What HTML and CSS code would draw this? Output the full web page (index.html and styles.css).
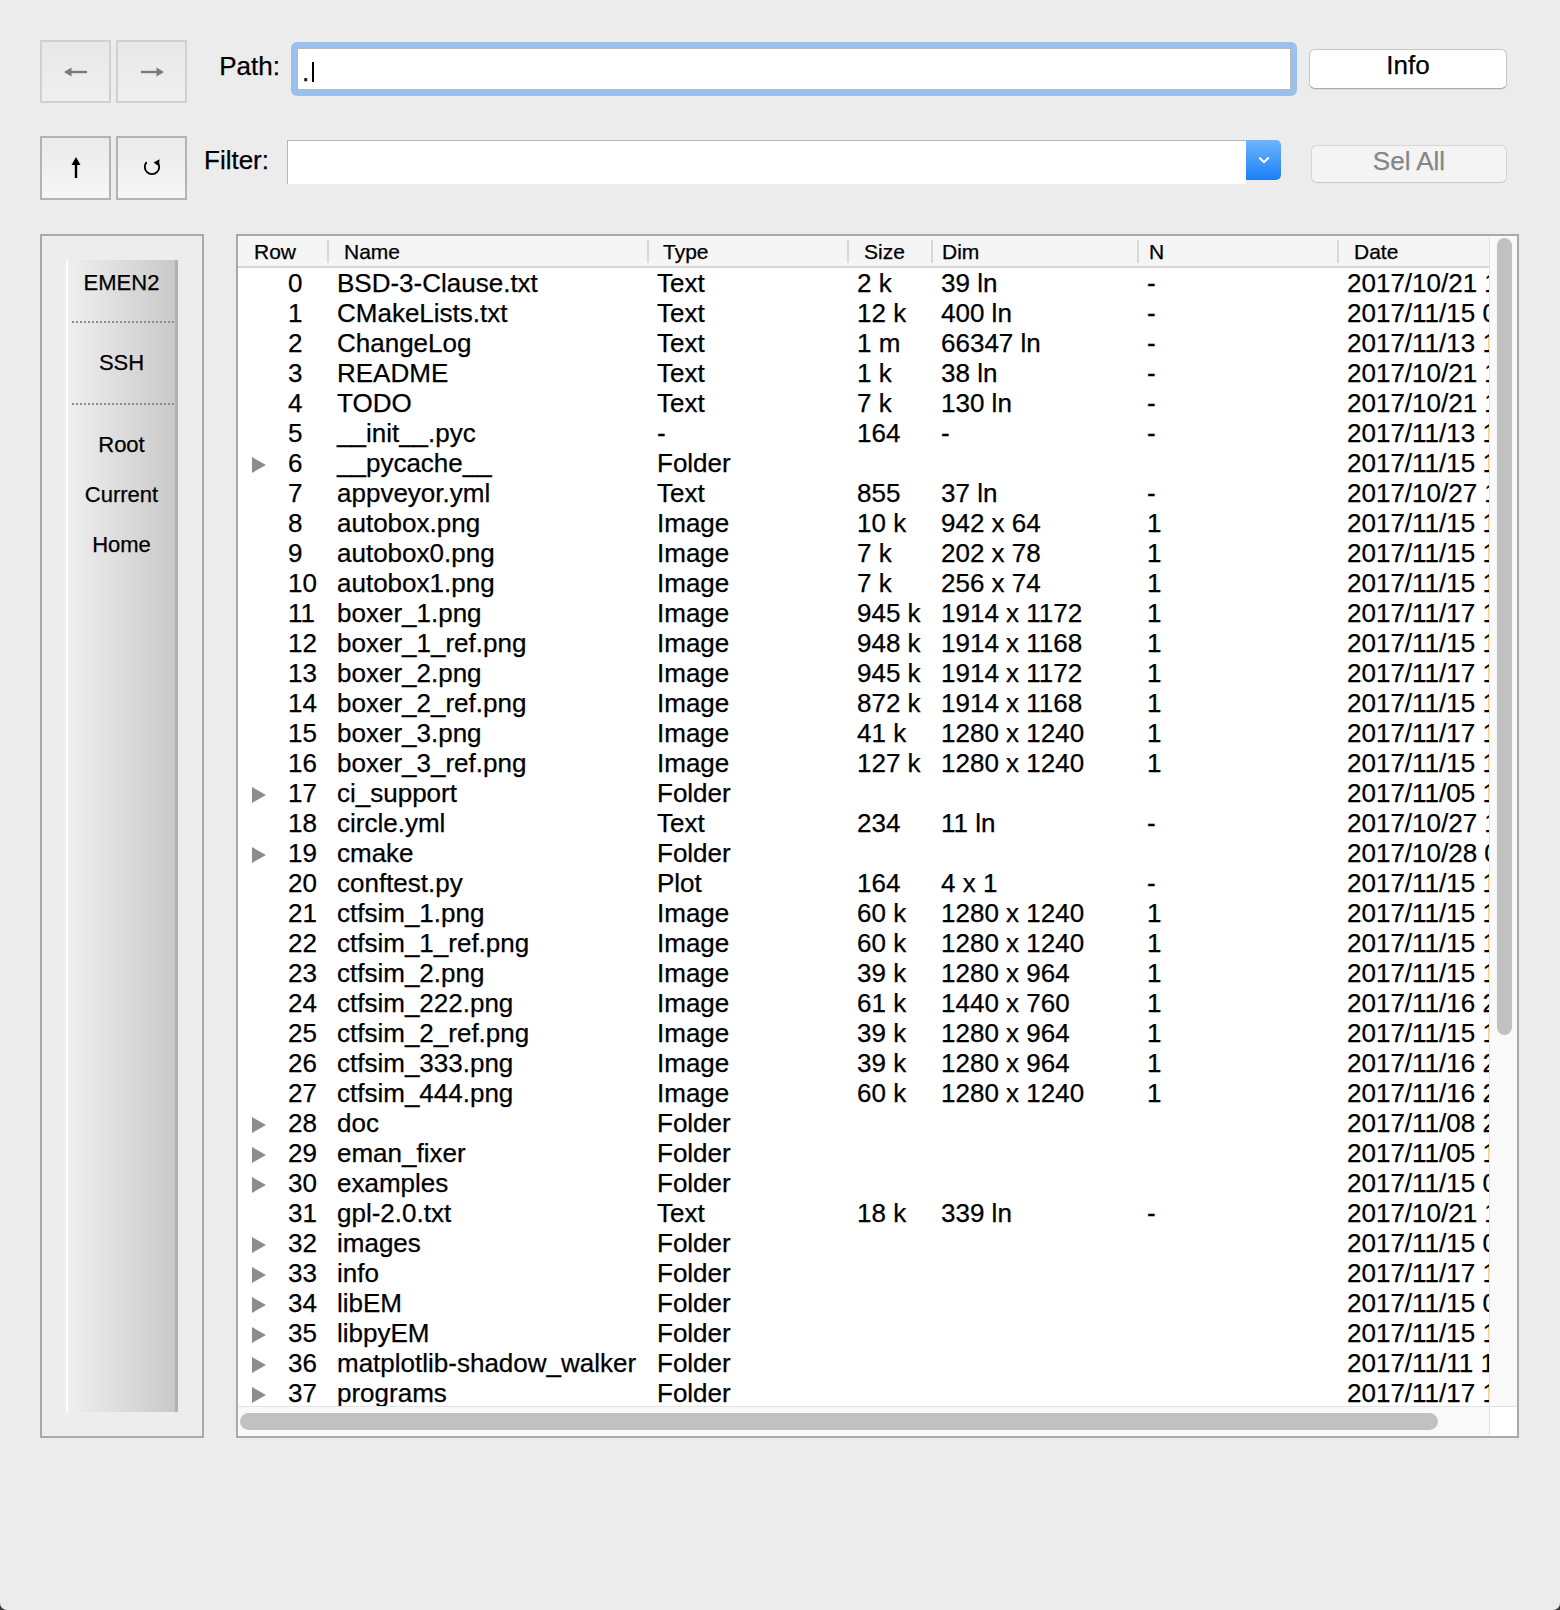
FILE: index.html
```html
<!DOCTYPE html>
<html>
<head>
<meta charset="utf-8">
<title>File Browser</title>
<link rel="stylesheet" href="styles.css">
</head>
<body>
<div class="window">
  <div class="bar bar1">
    <div class="btnpair">
      <div class="tbtn dis"><svg width="24" height="12" viewBox="0 0 24 12"><path d="M5 6H23" stroke="#7a7a7a" stroke-width="2.4"/><path d="M0 6L7.5 1.5V10.5Z" fill="#7a7a7a"/></svg></div>
      <div class="tbtn dis"><svg width="24" height="12" viewBox="0 0 24 12"><path d="M1 6H19" stroke="#7a7a7a" stroke-width="2.4"/><path d="M24 6L16.5 1.5V10.5Z" fill="#7a7a7a"/></svg></div>
    </div>
    <div class="lbl lbl-path">Path:</div>
    <div class="pathring"><div class="pathinput">.<span class="caret"></span></div></div>
    <div class="pbtn info">Info</div>
  </div>
  <div class="bar bar2">
    <div class="btnpair">
      <div class="tbtn"><svg width="12" height="22" viewBox="0 0 12 22"><path d="M6 6V21" stroke="#000" stroke-width="2.4"/><path d="M6 0L1.5 8H10.5Z" fill="#000"/></svg></div>
      <div class="tbtn"><svg width="20" height="20" viewBox="0 0 20 20"><path d="M4.6 4.2A7.2 7.2 0 1 0 15.4 4.2" fill="none" stroke="#000" stroke-width="1.9"/><path d="M17.6 1.2L16.8 8.2L11.6 4.6Z" fill="#000"/></svg></div>
    </div>
    <div class="lbl lbl-filter">Filter:</div>
    <div class="combo">
      <div class="combo-field"></div>
      <div class="combo-btn"><svg width="12" height="8" viewBox="0 0 12 8"><path d="M1.2 1.5L6 6.2L10.8 1.5" fill="none" stroke="#fff" stroke-width="2"/></svg></div>
    </div>
    <div class="pbtn selall">Sel All</div>
  </div>
  <div class="main">
    <div class="sidebar">
      <div class="places">
        <div class="place first">EMEN2</div>
        <div class="sep"><div class="dots"></div></div>
        <div class="place">SSH</div>
        <div class="sep"><div class="dots"></div></div>
        <div class="place">Root</div>
        <div class="place">Current</div>
        <div class="place">Home</div>
      </div>
    </div>
    <div class="tablebox">
      <div class="viewport">
        <div class="thead">
          <div class="h h-row">Row</div>
          <div class="h h-name">Name</div>
          <div class="h h-type">Type</div>
          <div class="h h-size">Size</div>
          <div class="h h-dim">Dim</div>
          <div class="h h-n">N</div>
          <div class="h h-date">Date</div>
        </div>
        <div class="row"><div class="c c-row"><span class="tw"></span>0</div><div class="c">BSD-3-Clause.txt</div><div class="c">Text</div><div class="c">2 k</div><div class="c">39 ln</div><div class="c">-</div><div class="c">2017/10/21 12:47</div></div>
        <div class="row"><div class="c c-row"><span class="tw"></span>1</div><div class="c">CMakeLists.txt</div><div class="c">Text</div><div class="c">12 k</div><div class="c">400 ln</div><div class="c">-</div><div class="c">2017/11/15 09:12</div></div>
        <div class="row"><div class="c c-row"><span class="tw"></span>2</div><div class="c">ChangeLog</div><div class="c">Text</div><div class="c">1 m</div><div class="c">66347 ln</div><div class="c">-</div><div class="c">2017/11/13 14:05</div></div>
        <div class="row"><div class="c c-row"><span class="tw"></span>3</div><div class="c">README</div><div class="c">Text</div><div class="c">1 k</div><div class="c">38 ln</div><div class="c">-</div><div class="c">2017/10/21 12:47</div></div>
        <div class="row"><div class="c c-row"><span class="tw"></span>4</div><div class="c">TODO</div><div class="c">Text</div><div class="c">7 k</div><div class="c">130 ln</div><div class="c">-</div><div class="c">2017/10/21 12:47</div></div>
        <div class="row"><div class="c c-row"><span class="tw"></span>5</div><div class="c">__init__.pyc</div><div class="c">-</div><div class="c">164</div><div class="c">-</div><div class="c">-</div><div class="c">2017/11/13 16:30</div></div>
        <div class="row"><div class="c c-row"><span class="tw fold"></span>6</div><div class="c">__pycache__</div><div class="c">Folder</div><div class="c"></div><div class="c"></div><div class="c"></div><div class="c">2017/11/15 16:22</div></div>
        <div class="row"><div class="c c-row"><span class="tw"></span>7</div><div class="c">appveyor.yml</div><div class="c">Text</div><div class="c">855</div><div class="c">37 ln</div><div class="c">-</div><div class="c">2017/10/27 11:03</div></div>
        <div class="row"><div class="c c-row"><span class="tw"></span>8</div><div class="c">autobox.png</div><div class="c">Image</div><div class="c">10 k</div><div class="c">942 x 64</div><div class="c">1</div><div class="c">2017/11/15 10:41</div></div>
        <div class="row"><div class="c c-row"><span class="tw"></span>9</div><div class="c">autobox0.png</div><div class="c">Image</div><div class="c">7 k</div><div class="c">202 x 78</div><div class="c">1</div><div class="c">2017/11/15 10:41</div></div>
        <div class="row"><div class="c c-row"><span class="tw"></span>10</div><div class="c">autobox1.png</div><div class="c">Image</div><div class="c">7 k</div><div class="c">256 x 74</div><div class="c">1</div><div class="c">2017/11/15 10:41</div></div>
        <div class="row"><div class="c c-row"><span class="tw"></span>11</div><div class="c">boxer_1.png</div><div class="c">Image</div><div class="c">945 k</div><div class="c">1914 x 1172</div><div class="c">1</div><div class="c">2017/11/17 13:58</div></div>
        <div class="row"><div class="c c-row"><span class="tw"></span>12</div><div class="c">boxer_1_ref.png</div><div class="c">Image</div><div class="c">948 k</div><div class="c">1914 x 1168</div><div class="c">1</div><div class="c">2017/11/15 10:41</div></div>
        <div class="row"><div class="c c-row"><span class="tw"></span>13</div><div class="c">boxer_2.png</div><div class="c">Image</div><div class="c">945 k</div><div class="c">1914 x 1172</div><div class="c">1</div><div class="c">2017/11/17 13:58</div></div>
        <div class="row"><div class="c c-row"><span class="tw"></span>14</div><div class="c">boxer_2_ref.png</div><div class="c">Image</div><div class="c">872 k</div><div class="c">1914 x 1168</div><div class="c">1</div><div class="c">2017/11/15 10:41</div></div>
        <div class="row"><div class="c c-row"><span class="tw"></span>15</div><div class="c">boxer_3.png</div><div class="c">Image</div><div class="c">41 k</div><div class="c">1280 x 1240</div><div class="c">1</div><div class="c">2017/11/17 13:58</div></div>
        <div class="row"><div class="c c-row"><span class="tw"></span>16</div><div class="c">boxer_3_ref.png</div><div class="c">Image</div><div class="c">127 k</div><div class="c">1280 x 1240</div><div class="c">1</div><div class="c">2017/11/15 10:41</div></div>
        <div class="row"><div class="c c-row"><span class="tw fold"></span>17</div><div class="c">ci_support</div><div class="c">Folder</div><div class="c"></div><div class="c"></div><div class="c"></div><div class="c">2017/11/05 15:20</div></div>
        <div class="row"><div class="c c-row"><span class="tw"></span>18</div><div class="c">circle.yml</div><div class="c">Text</div><div class="c">234</div><div class="c">11 ln</div><div class="c">-</div><div class="c">2017/10/27 11:03</div></div>
        <div class="row"><div class="c c-row"><span class="tw fold"></span>19</div><div class="c">cmake</div><div class="c">Folder</div><div class="c"></div><div class="c"></div><div class="c"></div><div class="c">2017/10/28 09:44</div></div>
        <div class="row"><div class="c c-row"><span class="tw"></span>20</div><div class="c">conftest.py</div><div class="c">Plot</div><div class="c">164</div><div class="c">4 x 1</div><div class="c">-</div><div class="c">2017/11/15 15:37</div></div>
        <div class="row"><div class="c c-row"><span class="tw"></span>21</div><div class="c">ctfsim_1.png</div><div class="c">Image</div><div class="c">60 k</div><div class="c">1280 x 1240</div><div class="c">1</div><div class="c">2017/11/15 10:41</div></div>
        <div class="row"><div class="c c-row"><span class="tw"></span>22</div><div class="c">ctfsim_1_ref.png</div><div class="c">Image</div><div class="c">60 k</div><div class="c">1280 x 1240</div><div class="c">1</div><div class="c">2017/11/15 10:41</div></div>
        <div class="row"><div class="c c-row"><span class="tw"></span>23</div><div class="c">ctfsim_2.png</div><div class="c">Image</div><div class="c">39 k</div><div class="c">1280 x 964</div><div class="c">1</div><div class="c">2017/11/15 10:41</div></div>
        <div class="row"><div class="c c-row"><span class="tw"></span>24</div><div class="c">ctfsim_222.png</div><div class="c">Image</div><div class="c">61 k</div><div class="c">1440 x 760</div><div class="c">1</div><div class="c">2017/11/16 21:15</div></div>
        <div class="row"><div class="c c-row"><span class="tw"></span>25</div><div class="c">ctfsim_2_ref.png</div><div class="c">Image</div><div class="c">39 k</div><div class="c">1280 x 964</div><div class="c">1</div><div class="c">2017/11/15 10:41</div></div>
        <div class="row"><div class="c c-row"><span class="tw"></span>26</div><div class="c">ctfsim_333.png</div><div class="c">Image</div><div class="c">39 k</div><div class="c">1280 x 964</div><div class="c">1</div><div class="c">2017/11/16 21:15</div></div>
        <div class="row"><div class="c c-row"><span class="tw"></span>27</div><div class="c">ctfsim_444.png</div><div class="c">Image</div><div class="c">60 k</div><div class="c">1280 x 1240</div><div class="c">1</div><div class="c">2017/11/16 21:15</div></div>
        <div class="row"><div class="c c-row"><span class="tw fold"></span>28</div><div class="c">doc</div><div class="c">Folder</div><div class="c"></div><div class="c"></div><div class="c"></div><div class="c">2017/11/08 20:02</div></div>
        <div class="row"><div class="c c-row"><span class="tw fold"></span>29</div><div class="c">eman_fixer</div><div class="c">Folder</div><div class="c"></div><div class="c"></div><div class="c"></div><div class="c">2017/11/05 15:20</div></div>
        <div class="row"><div class="c c-row"><span class="tw fold"></span>30</div><div class="c">examples</div><div class="c">Folder</div><div class="c"></div><div class="c"></div><div class="c"></div><div class="c">2017/11/15 09:12</div></div>
        <div class="row"><div class="c c-row"><span class="tw"></span>31</div><div class="c">gpl-2.0.txt</div><div class="c">Text</div><div class="c">18 k</div><div class="c">339 ln</div><div class="c">-</div><div class="c">2017/10/21 12:47</div></div>
        <div class="row"><div class="c c-row"><span class="tw fold"></span>32</div><div class="c">images</div><div class="c">Folder</div><div class="c"></div><div class="c"></div><div class="c"></div><div class="c">2017/11/15 09:12</div></div>
        <div class="row"><div class="c c-row"><span class="tw fold"></span>33</div><div class="c">info</div><div class="c">Folder</div><div class="c"></div><div class="c"></div><div class="c"></div><div class="c">2017/11/17 13:58</div></div>
        <div class="row"><div class="c c-row"><span class="tw fold"></span>34</div><div class="c">libEM</div><div class="c">Folder</div><div class="c"></div><div class="c"></div><div class="c"></div><div class="c">2017/11/15 09:12</div></div>
        <div class="row"><div class="c c-row"><span class="tw fold"></span>35</div><div class="c">libpyEM</div><div class="c">Folder</div><div class="c"></div><div class="c"></div><div class="c"></div><div class="c">2017/11/15 16:22</div></div>
        <div class="row"><div class="c c-row"><span class="tw fold"></span>36</div><div class="c">matplotlib-shadow_walker</div><div class="c">Folder</div><div class="c"></div><div class="c"></div><div class="c"></div><div class="c">2017/11/11 14:36</div></div>
        <div class="row"><div class="c c-row"><span class="tw fold"></span>37</div><div class="c">programs</div><div class="c">Folder</div><div class="c"></div><div class="c"></div><div class="c"></div><div class="c">2017/11/17 13:58</div></div>
      </div>
      <div class="vscroll"><div class="vthumb"></div></div>
      <div class="hscroll"><div class="hthumb"></div></div>
      <div class="corner"></div>
    </div>
  </div>
</div>
</body>
</html>
```
FILE: styles.css
```css
html {
  background: #3a3a3a;
}
body {
  margin: 0;
}
.window {
  width: 1560px;
  height: 1610px;
  box-sizing: border-box;
  padding-top: 40px;
  background: #ececec;
  border-radius: 0 0 7px 7px;
  font-family: "Liberation Sans", Arial, Helvetica, sans-serif;
  color: #000;
  overflow: hidden;
  -webkit-text-stroke: 0.25px currentColor;
}

/* ---------- top bars ---------- */
.bar {
  display: flex;
  align-items: flex-start;
  margin-left: 40px;
}
.bar1 {
  height: 63px;
}
.bar2 {
  height: 64px;
  margin-top: 33px;
}
.btnpair {
  display: flex;
  gap: 5px;
  height: 100%;
}
.tbtn {
  width: 71px;
  height: 100%;
  box-sizing: border-box;
  border: 2px solid #b3b3b3;
  background: linear-gradient(#eaeaea, #f6f6f6);
  display: flex;
  align-items: center;
  justify-content: center;
}
.tbtn.dis {
  border-color: #d0d0d0;
  background: linear-gradient(#e8e8e8, #efefef);
}
.lbl {
  font-size: 26px;
  line-height: 30px;
  text-align: right;
  box-sizing: border-box;
  white-space: nowrap;
}
.lbl-path {
  width: 104px;
  padding-right: 11px;
  margin-top: 11px;
}
.lbl-filter {
  width: 100px;
  padding-right: 18px;
  margin-top: 9px;
}
.pathring {
  width: 1006px;
  height: 54px;
  margin-top: 2px;
  box-sizing: border-box;
  padding: 6px;
  background: #98c1ee;
  border-radius: 6px;
}
.pathinput {
  height: 42px;
  box-sizing: border-box;
  border: 1px solid #b7b7b7;
  background: #fff;
  font-size: 26px;
  line-height: 30px;
  padding: 8px 0 0 4px;
}
.caret {
  display: inline-block;
  width: 2px;
  height: 20px;
  margin-left: 3px;
  background: #000;
  vertical-align: -1px;
}
.pbtn {
  box-sizing: border-box;
  font-size: 26px;
  line-height: 30px;
  text-align: center;
  border-radius: 6px;
}
.info {
  width: 198px;
  height: 40px;
  margin-left: 12px;
  margin-top: 9px;
  background: #fff;
  border: 1px solid #c6c6c6;
  border-bottom-color: #a9a9a9;
  box-shadow: 0 1px 0 rgba(0, 0, 0, 0.05);
}
.selall {
  width: 196px;
  height: 38px;
  margin-left: 30px;
  margin-top: 9px;
  background: #f4f4f4;
  border: 1px solid #d6d6d6;
  border-bottom-color: #c8c8c8;
  color: #868686;
}
.combo {
  display: flex;
  width: 994px;
  height: 44px;
  margin-top: 4px;
}
.combo-field {
  flex: 1;
  background: #fff;
  border-top: 1px solid #b5b5b5;
  border-left: 1px solid #b5b5b5;
}
.combo-btn {
  width: 35px;
  height: 40px;
  border-radius: 0 5px 5px 0;
  background: linear-gradient(#6eb5fb, #1a7ff8);
  display: flex;
  align-items: center;
  justify-content: center;
}

/* ---------- main area ---------- */
.main {
  display: flex;
  gap: 32px;
  margin-top: 34px;
  margin-left: 40px;
  height: 1204px;
}
.sidebar {
  width: 164px;
  box-sizing: border-box;
  border: 2px solid #a9a9a9;
  background: #ededed;
  padding: 24px;
  display: flex;
}
.places {
  flex: 1;
  border-left: 2px solid #fff;
  border-right: 3px solid #b2b2b2;
  background: linear-gradient(to right, #efefef, #c9c9c9);
  font-size: 22px;
  text-align: center;
}
.place {
  height: 50px;
  line-height: 50px;
}
.place.first {
  height: 46px;
  line-height: 46px;
}
.sep {
  height: 32px;
  padding: 15px 0 0 4px;
  box-sizing: border-box;
}
.dots {
  height: 2px;
  background-image: linear-gradient(to right, #8d8d8d 45%, transparent 45%);
  background-size: 4px 2px;
}

/* ---------- table ---------- */
.tablebox {
  width: 1283px;
  box-sizing: border-box;
  border: 2px solid #a9a9a9;
  background: #fff;
  display: grid;
  grid-template-columns: minmax(0, 1fr) 28px;
  grid-template-rows: minmax(0, 1fr) 30px;
}
.viewport {
  overflow: hidden;
  min-width: 0;
  min-height: 0;
}
.thead,
.row {
  display: grid;
  grid-template-columns: 89px 320px 200px 84px 206px 200px 260px;
}
.thead {
  height: 32px;
  box-sizing: border-box;
  background: #f5f5f5;
  border-bottom: 2px solid #d5d5d5;
  font-size: 21px;
}
.h {
  line-height: 27px;
  padding-top: 2px;
  white-space: nowrap;
  background: linear-gradient(#d8d8d8, #d8d8d8) no-repeat left center / 2px 23px;
}
.h-row {
  background: none;
  padding-left: 16px;
}
.h-name { padding-left: 17px; }
.h-type { padding-left: 16px; }
.h-size { padding-left: 17px; }
.h-dim { padding-left: 11px; }
.h-n { padding-left: 12px; }
.h-date { padding-left: 17px; }

.row {
  height: 30px;
  font-size: 26px;
  line-height: 30px;
}
.c {
  padding-left: 10px;
  white-space: nowrap;
  overflow: hidden;
}
.c-row {
  padding-left: 14px;
  display: flex;
  align-items: center;
}
.tw {
  flex: none;
  width: 36px;
  height: 16px;
}
.tw.fold {
  width: 0;
  height: 0;
  border-left: 14px solid #8d8d8d;
  border-top: 8px solid transparent;
  border-bottom: 8px solid transparent;
  margin-right: 22px;
  margin-top: 3px;
}
.vscroll {
  background: #f9f9f9;
  border-left: 1px solid #e3e3e3;
}
.vthumb {
  width: 15px;
  height: 797px;
  margin: 2px 0 0 7px;
  border-radius: 8px;
  background: #c1c1c1;
}
.hscroll {
  background: #f9f9f9;
  border-top: 1px solid #e3e3e3;
}
.hthumb {
  width: 1198px;
  height: 17px;
  margin: 6px 0 0 2px;
  border-radius: 9px;
  background: #c1c1c1;
}
.corner {
  background: #fff;
  border-top: 1px solid #e3e3e3;
  border-left: 1px solid #e3e3e3;
}
```
